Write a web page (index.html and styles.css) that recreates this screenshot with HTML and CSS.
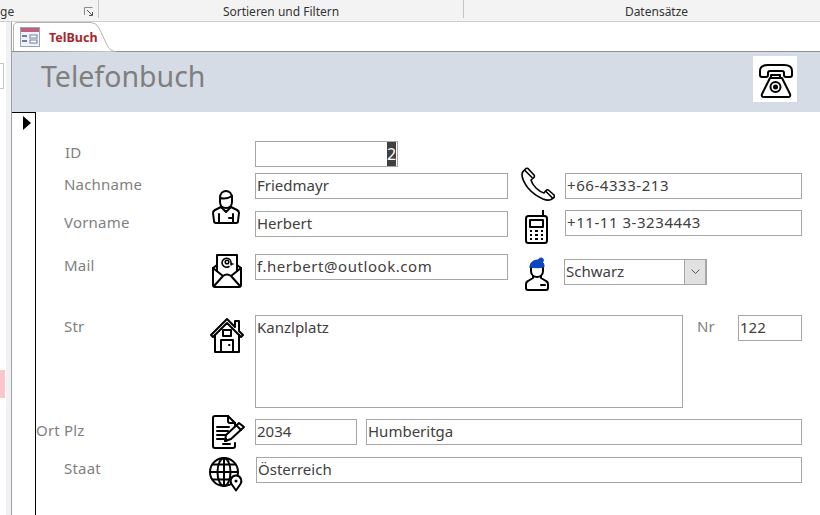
FILE: index.html
```html
<!DOCTYPE html>
<html lang="de">
<head>
  <meta charset="UTF-8">
  <title>TelBuch</title>
  <link rel="stylesheet" href="styles.css">
</head>
<body>

  <div class="ribbon">
    <div class="group group-first">
      <span>ge</span>
      <svg class="launcher" width="10" height="10" viewBox="0 0 10 10"><path d="M0.5 8V0.5H8.5" fill="none" stroke="#8a8a8a"/><path d="M3 3L8 8M5 8.5H8.5V5" fill="none" stroke="#555"/></svg>
    </div>
    <div class="group group-sort">Sortieren und Filtern</div>
    <div class="group group-rec">Datensätze</div>
  </div>

  <div class="main">
    <div class="nav">
      <div class="nav-search"></div>
      <div class="nav-pink"></div>
    </div>

    <div class="doc">
      <div class="tabs">
        <div class="tab">
          <svg class="tab-shape" width="104" height="30" viewBox="0 0 104 30"><path d="M0.5 29V5Q0.5 0.5 5 0.5H78Q83 0.5 86 6L94 23Q97 29.5 103 29.5" fill="#fff" stroke="#b9b2a8"/></svg>
          <svg class="tab-icon" width="20" height="20" viewBox="0 0 20 20">
            <rect x="0.5" y="0.5" width="19" height="19" fill="#eef1f7" stroke="#9aa3b5"/>
            <rect x="1" y="1" width="18" height="4" fill="#c0607f"/>
            <path d="M2 9H7M2 14H7" stroke="#6f7e97" stroke-width="2"/>
            <rect x="10" y="8" width="7" height="3" fill="#fff" stroke="#6f7e97"/>
            <rect x="10" y="13" width="7" height="3" fill="#fff" stroke="#6f7e97"/>
          </svg>
          <span class="tab-label">TelBuch</span>
        </div>
      </div>

      <div class="header">
        <h1>Telefonbuch</h1>
        <div class="header-pic">
          <svg width="44" height="46" viewBox="0 0 44 46" fill="none" stroke="#000" stroke-width="2" stroke-linejoin="round" stroke-linecap="round">
            <path d="M7 19V15Q7 9 15 9H31Q39 9 39 15V19Q39 21 37 21H33Q31 21 31 19V17Q31 15 29 15H17Q15 15 15 17V19Q15 21 13 21H9Q7 21 7 19Z"/>
            <path d="M18 22V19H27V22"/>
            <path d="M17 22H29L37 38Q38 41 35 41H11Q8 41 9 38Z"/>
            <circle cx="22.500" cy="31" r="5"/>
            <circle cx="22.500" cy="31" r="1.500" fill="#000"/>
          </svg>
        </div>
      </div>

      <div class="body">
        <div class="selector">
          <svg class="caret" width="10" height="14" viewBox="0 0 10 14"><path d="M1 0L9 7L1 14Z" fill="#000"/></svg>
        </div>

        <div class="form">
          <div class="row row-id">
            <div class="label lbl-id">ID</div>
            <div class="field f-id"><span class="sel">2</span></div>
          </div>

          <div class="row row-names">
            <div class="labels">
              <div class="label lbl-nach">Nachname</div>
              <div class="label lbl-vor">Vorname</div>
            </div>
            <div class="icon icon-person">
              <svg width="28" height="35" viewBox="0 0 28 35" fill="none" stroke="#000" stroke-width="2" stroke-linejoin="round" stroke-linecap="round">
                <path d="M8 8C8 3 11 1 14 1C17 1 20 3 20 8V12C20 16 17 18 14 18C11 18 8 16 8 12Z"/>
                <path d="M8 8C12 9 17 8 20 6"/>
                <path d="M9 17L3 20Q1 21 1 23L2 31Q2 33 4 33H24Q26 33 26 31L27 23Q27 21 25 20L19 17"/>
                <path d="M9 17L14 22L19 17M7 24V33M21 24V33M17 28H21"/>
              </svg>
            </div>
            <div class="col-names">
              <div class="field f-wide">Friedmayr</div>
              <div class="field f-wide">Herbert</div>
            </div>
            <div class="col-icons">
              <svg class="icon-phone" width="34" height="34" viewBox="0 0 34 34" fill="none" stroke="#000" stroke-width="1.600" stroke-linejoin="round" stroke-linecap="round">
                <path d="M7 1.500L13 8Q14 9.500 12.500 11L10 13Q11 17 15 21Q19 25 23 26L25 23.500Q26.500 22 28 23.500L33 28Q34 29.500 32.500 31L30 32.500Q27 34 22 32Q13 28 7 21Q1 13 1 7.500Q1 5 3 3.500L5 1.500Q6 1 7 1.500Z"/>
                <path d="M4 3.500L11 10.500M25 24.500L31.500 31"/>
              </svg>
              <svg class="icon-mobile" width="24" height="34" viewBox="0 0 24 34" fill="none" stroke="#000" stroke-width="2" stroke-linejoin="round">
                <path d="M18 0V6"/>
                <rect x="1" y="6" width="21" height="27" rx="2.500"/>
                <rect x="5" y="10" width="13" height="7"/>
                <path d="M5 21H7M10 21H13M16 21H18M5 25H7M10 25H13M16 25H18M5 29H7M10 29H13M16 29H18" stroke-width="2"/>
              </svg>
            </div>
            <div class="col-phones">
              <div class="field f-phone wide-digits">+66-4333-213</div>
              <div class="field f-phone wide-digits">+11-11 3-3234443</div>
            </div>
          </div>

          <div class="row row-mail">
            <div class="label lbl-mail">Mail</div>
            <div class="icon icon-mail">
              <svg width="30" height="34" viewBox="0 0 30 34" fill="none" stroke="#000" stroke-width="2" stroke-linejoin="round" stroke-linecap="round">
                <path d="M5 11L1 14V31Q1 33 3 33H27Q29 33 29 31V14L25 11"/>
                <path d="M5 17V1H25V17"/>
                <path d="M1 14L11 22M29 14L19 22M2 32L11 22Q15 19 19 22L28 32"/>
                <path d="M19 11V8A4.500 4.500 0 1 0 17 12.500M19 8Q19 10.500 21 10" stroke-width="1.500"/>
                <circle cx="15" cy="8" r="1.800" stroke-width="1.500"/>
              </svg>
            </div>
            <div class="field f-wide wide-digits">f.herbert@outlook.com</div>
            <div class="icon icon-woman">
              <svg width="24" height="34" viewBox="0 0 24 34" fill="none" stroke="#000" stroke-width="2" stroke-linejoin="round" stroke-linecap="round">
                <path d="M6 10V14C6 18 9 20 12 20C15 20 18 18 18 14V10"/>
                <path d="M5 10C5 5 9 3 13 3C14 1 17 0 18 2C19 4 18 5 17 5C19 6 19 8 19 10C15 11 9 11 5 10Z" fill="#0b46c8" stroke="#0b3fa8" stroke-width="1"/>
                <path d="M8 19V21L3 24Q1 25 1 27V31Q1 33 3 33H21Q23 33 23 31V27Q23 25 21 24L16 21V19"/>
                <path d="M16 28H20"/>
              </svg>
            </div>
            <div class="combo">
              <span class="combo-text">Schwarz</span>
              <span class="combo-btn">
                <svg width="9" height="6" viewBox="0 0 9 6"><path d="M0.500 0.500L4.500 4.500L8.500 0.500" fill="none" stroke="#555"/></svg>
              </span>
            </div>
          </div>

          <div class="row row-str">
            <div class="label lbl-str">Str</div>
            <div class="icon icon-house">
              <svg width="34" height="35" viewBox="0 0 34 35" fill="none" stroke="#000" stroke-width="2" stroke-linejoin="round" stroke-linecap="round">
                <path d="M1 17L17 1L25 9V3H29V13L33 17L31 19L17 5L3 19Z"/>
                <path d="M5 17V34H29V17"/>
                <rect x="13" y="12" width="8" height="6"/>
                <path d="M11 34V22H23V34"/>
                <path d="M19 27H19.500"/>
              </svg>
            </div>
            <div class="field f-area">Kanzlplatz</div>
            <div class="label lbl-nr">Nr</div>
            <div class="field f-nr">122</div>
          </div>

          <div class="row row-ort">
            <div class="label lbl-ort">Ort Plz</div>
            <div class="icon icon-doc">
              <svg width="34" height="35" viewBox="0 0 34 35" fill="none" stroke="#000" stroke-width="2" stroke-linejoin="round" stroke-linecap="round">
                <path d="M23 19V8L16 1H3Q1 1 1 3V31Q1 33 3 33H21Q23 33 23 31V28"/>
                <path d="M16 1V6Q16 8 18 8H23"/>
                <path d="M5 12H17M5 16H16M5 20H15M5 24H12M11 29H18"/>
                <path d="M13 26L14 20L27 8L32 12L19 24Z" fill="#fff"/>
                <path d="M24.500 10.500L29 15"/>
                <path d="M14 24L13 26L15 25.500" fill="#000"/>
              </svg>
            </div>
            <div class="field f-plz">2034</div>
            <div class="field f-ort">Humberitga</div>
          </div>

          <div class="row row-staat">
            <div class="label lbl-staat">Staat</div>
            <div class="icon icon-globe">
              <svg width="35" height="35" viewBox="0 0 35 35" fill="none" stroke="#000" stroke-width="2" stroke-linejoin="round" stroke-linecap="round">
                <circle cx="15" cy="15" r="14"/>
                <ellipse cx="15" cy="15" rx="6.500" ry="14"/>
                <path d="M15 1V29M1 15H29M3.500 7.500H26.500M3.500 22.500H26.500"/>
                <path d="M27 33.500L22.500 27Q21 24.500 22 22Q23.500 18.500 27 18.500Q30.500 18.500 32 22Q33 24.500 31.500 27Z" fill="#fff"/>
                <circle cx="27" cy="24" r="1.500" fill="#000" stroke="none"/>
              </svg>
            </div>
            <div class="field f-staat">Österreich</div>
          </div>
        </div>
      </div>
    </div>
  </div>

</body>
</html>
```

FILE: styles.css
```css
html, body {
  margin: 0;
  padding: 0;
  width: 820px;
  height: 515px;
  overflow: hidden;
  background-color: #fff;
  font-family: "Noto Sans", sans-serif;
}
.ribbon {
  display: flex;
  height: 21px;
  background-color: #f3f3f3;
  border-bottom: 1px solid #cfcfcf;
  font-size: 12px;
  color: #333;
}
.group {
  height: 18px;
  line-height: 23px;
  text-align: center;
  border-right: 1px solid #c6c6c6;
}
.group-first {
  position: relative;
  width: 98px;
  text-align: left;
}
.launcher {
  position: absolute;
  left: 84px;
  top: 7px;
}
.group-sort {
  width: 364px;
}
.group-rec {
  width: 327px;
  padding-left: 29px;
  border-right: none;
}

.main {
  display: flex;
  height: 493px;
}
.nav {
  width: 11px;
  border-right: 1px solid #a0a0a4;
  background: linear-gradient(to right, #fff 6px, #f0f1f3 6px);
}
.nav-search {
  width: 3px;
  height: 24px;
  margin-top: 41px;
  border: 1px solid #c8c8c8;
  border-left: none;
  background-color: #fff;
}
.nav-pink {
  width: 5px;
  height: 28px;
  margin-top: 281px;
  background-color: #fcc5c8;
}

.doc {
  flex: 1;
  display: flex;
  flex-direction: column;
}
.tabs {
  height: 29px;
  border-bottom: 1px solid #8f8f93;
}
.tab {
  position: relative;
  height: 30px;
  margin-left: 1px;
}
.tab-shape {
  position: absolute;
  left: 0;
  top: 0;
}
.tab-icon {
  position: absolute;
  left: 7px;
  top: 5px;
}
.tab-label {
  position: absolute;
  left: 36px;
  top: 7px;
  font-size: 12.500px;
  font-weight: bold;
  color: #a4262c;
}
.header {
  display: flex;
  justify-content: space-between;
  height: 60px;
  background-color: #d6dce5;
}
h1 {
  margin: 0 0 0 29px;
  font-size: 28.500px;
  font-weight: normal;
  line-height: 49px;
  color: #7f7f7f;
}
.header-pic {
  width: 44px;
  height: 46px;
  margin: 4px 23px 0 0;
  background-color: #fff;
}

.body {
  flex: 1;
  display: flex;
}
.selector {
  width: 23px;
  border-top: 1px solid #000;
  border-right: 1px solid #000;
}
.caret {
  display: block;
  margin: 3px 0 0 10px;
}
.form {
  flex: 1;
  font-size: 15px;
}
.row {
  display: flex;
  align-items: flex-start;
}
.label {
  color: #7f7f7f;
  line-height: 22px;
  letter-spacing: 0.200px;
  white-space: nowrap;
}
.field {
  box-sizing: border-box;
  height: 26px;
  border: 1px solid #a6a6a6;
  padding-left: 1px;
  line-height: 22px;
  color: #404040;
  white-space: nowrap;
}
.wide-digits {
  letter-spacing: 0.550px;
}
.icon svg {
  display: block;
}

.row-id {
  padding-top: 29px;
}
.lbl-id {
  width: 191px;
  margin: 0 0 0 29px;
}
.f-id {
  width: 143px;
  margin-left: -1px;
  padding: 0 1px 0 0;
  text-align: right;
}
.sel {
  display: inline-block;
  width: 9px;
  background-color: #404040;
  color: #fff;
  font-size: 16px;
  line-height: 24px;
  text-align: center;
}

.row-names {
  margin-top: 6px;
}
.labels {
  width: 148px;
  margin-left: 28px;
}
.lbl-vor {
  margin-top: 16px;
}
.icon-person {
  width: 43px;
  margin-top: 17px;
}
.col-names {
  display: flex;
  flex-direction: column;
  gap: 12px;
}
.f-wide {
  width: 253px;
}
.col-icons {
  display: flex;
  flex-direction: column;
  width: 44px;
  margin: -6px 0 0 13px;
}
.icon-phone {
  display: block;
}
.icon-mobile {
  display: block;
  margin: 9px 0 0 4px;
}
.col-phones {
  display: flex;
  flex-direction: column;
  gap: 11px;
}
.f-phone {
  width: 237px;
}

.row-mail {
  margin-top: 10px;
}
.lbl-mail {
  width: 148px;
  margin-left: 28px;
}
.icon-mail {
  width: 43px;
}
.icon-woman {
  width: 39px;
  margin: 3px 0 0 17px;
}
.combo {
  box-sizing: border-box;
  display: flex;
  justify-content: space-between;
  width: 143px;
  height: 26px;
  margin-top: 5px;
  border: 1px solid #a6a6a6;
  border-right-width: 2px;
  color: #404040;
  line-height: 22px;
}
.combo-text {
  padding-left: 1px;
}
.combo-btn {
  display: flex;
  align-items: center;
  justify-content: center;
  width: 20px;
  background-color: #e1e1e1;
  border-left: 1px solid #a6a6a6;
}

.row-str {
  margin-top: 24px;
}
.lbl-str {
  width: 146px;
  margin-left: 28px;
}
.icon-house {
  width: 45px;
  margin-top: 3px;
}
.f-area {
  width: 428px;
  height: 93px;
}
.lbl-nr {
  width: 41px;
  margin-left: 14px;
}
.f-nr {
  width: 64px;
}

.row-ort {
  margin-top: 11px;
}
.lbl-ort {
  width: 176px;
}
.icon-doc {
  width: 43px;
  margin-top: -4px;
}
.f-plz {
  width: 102px;
}
.f-ort {
  width: 436px;
  margin-left: 9px;
}

.row-staat {
  margin-top: 7px;
}
.lbl-staat {
  width: 145px;
  margin-left: 28px;
}
.icon-globe {
  width: 47px;
}
.f-staat {
  width: 546px;
}
```
